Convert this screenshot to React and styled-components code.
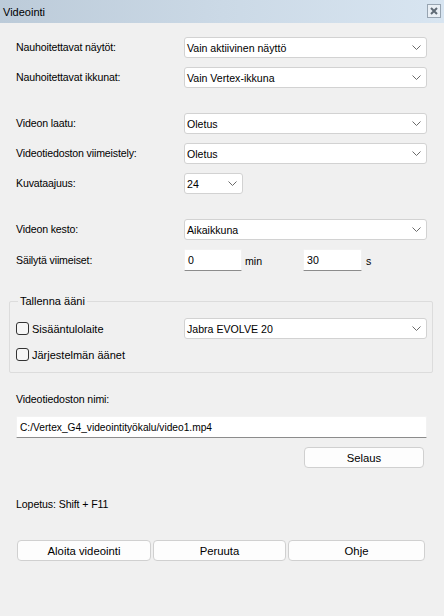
import React from "react";
import styled, { createGlobalStyle } from "styled-components";

const Global = createGlobalStyle`
  html, body { margin: 0; padding: 0; background: #f0f0f0; }
  body { font-family: "Liberation Sans", Arial, sans-serif; font-size: 10.6px; color: #000; }
  * { box-sizing: border-box; }
`;

const Window = styled.div`
  width: 444px;
  height: 616px;
  background: #f0f0f0;
  display: flex;
  flex-direction: column;
  overflow: hidden;
`;

const TitleBar = styled.div`
  height: 23px;
  flex: none;
  display: flex;
  align-items: center;
  justify-content: space-between;
  padding: 0 3px 0 3px;
  background: linear-gradient(90deg, #bccbd9 0%, #cbd9e6 50%, #d8e5f1 100%);
  font-size: 11px;
  color: #000;
`;

const CloseBox = styled.div`
  width: 14px;
  height: 14px;
  margin-top: -2px;
  border: 1px solid #97a4b1;
  background: #e9eff5;
  display: flex;
  align-items: center;
  justify-content: center;
`;

const Body = styled.div`
  padding: 14px 17px 0 16px;
  display: flex;
  flex-direction: column;
`;

const Section = styled.div`
  display: flex;
  flex-direction: column;
  gap: 9px;
  margin-top: ${(p) => p.$top || 0}px;
`;

const Row = styled.div`
  display: grid;
  grid-template-columns: 168px 1fr;
  align-items: center;
  min-height: 21px;
`;

const Label = styled.span`
  white-space: nowrap;
  line-height: 13px;
  letter-spacing: -0.15px;
`;

const SelectBox = styled.div`
  height: 21px;
  width: ${(p) => (p.$w ? `${p.$w}px` : "100%")};
  background: #fff;
  border: 1px solid #d2d2d2;
  border-radius: 3px;
  display: flex;
  align-items: center;
  justify-content: space-between;
  padding: 0 5px 0 2px;
  white-space: nowrap;
`;

const Chevron = () => (
  <svg width="9" height="5" viewBox="0 0 9 5" style={{ flex: "none" }}>
    <path d="M0.5 0.5 L4.5 4.5 L8.5 0.5" fill="none" stroke="#6a6a6a" strokeWidth="1" />
  </svg>
);

const Select = ({ value, w }) => (
  <SelectBox $w={w}>
    <span>{value}</span>
    <Chevron />
  </SelectBox>
);

const TextBox = styled.div`
  height: 22px;
  width: ${(p) => (p.$w ? `${p.$w}px` : "100%")};
  background: #fff;
  border: 1px solid #f2f2f2;
  border-bottom: 1px solid #8c8c8c;
  border-radius: 2px 2px 0 0;
  display: flex;
  align-items: center;
  padding: 0 3px;
  white-space: nowrap;
  font-size: ${(p) => p.$fs || 10.6}px;
`;

const InlineFields = styled.div`
  display: flex;
  align-items: center;
`;

const Unit = styled.span`
  width: ${(p) => p.$w}px;
  margin-left: ${(p) => p.$ml}px;
  line-height: 13px;
  padding-top: 3px;
`;

const GroupBox = styled.div`
  position: relative;
  margin: 30px -6px 0 -7px;
  border: 1px solid #dcdcdc;
  border-radius: 2px;
  padding: 16px 5px 7px 6px;
  display: flex;
  flex-direction: column;
  gap: 5px;
`;

const Legend = styled.span`
  position: absolute;
  top: -7px;
  left: 8px;
  padding: 0 2px;
  background: #f0f0f0;
  line-height: 13px;
  font-size: 11px;
`;

const CheckLabel = styled.label`
  display: flex;
  align-items: center;
  gap: 3px;
  white-space: nowrap;
  font-size: 11px;
`;

const Box = styled.span`
  width: 13px;
  height: 13px;
  border: 1px solid #333;
  border-radius: 3px;
  background: #f6f6f6;
  flex: none;
`;

const PlainLabel = styled.div`
  line-height: 14px;
  margin-top: ${(p) => p.$top}px;
  letter-spacing: -0.1px;
`;

const Button = styled.div`
  height: 21px;
  background: #fdfdfd;
  border: 1px solid #d0d0d0;
  border-radius: 4px;
  display: flex;
  align-items: center;
  justify-content: center;
  font-size: 11.3px;
`;

const BrowseRow = styled.div`
  display: flex;
  justify-content: flex-end;
  margin-top: 9px;
  padding-right: 3px;
`;

const BrowseButton = styled(Button)`
  width: 120px;
`;

const ButtonBar = styled.div`
  display: grid;
  grid-template-columns: 134px 133px 137px;
  gap: 2px;
  margin: 29px 0 0 1px;
`;

const Spacer = styled.div`
  margin-top: 10px;
`;

export default function App() {
  return (
    <>
      <Global />
      <Window>
        <TitleBar>
          <span>Videointi</span>
          <CloseBox>
            <svg width="8" height="8" viewBox="0 0 8 8">
              <path d="M1 1 L7 7 M7 1 L1 7" stroke="#5f6a75" strokeWidth="2" />
            </svg>
          </CloseBox>
        </TitleBar>
        <Body>
          <Section>
            <Row>
              <Label>Nauhoitettavat näytöt:</Label>
              <Select value="Vain aktiivinen näyttö" />
            </Row>
            <Row>
              <Label>Nauhoitettavat ikkunat:</Label>
              <Select value="Vain Vertex-ikkuna" />
            </Row>
          </Section>
          <Section $top={25}>
            <Row>
              <Label>Videon laatu:</Label>
              <Select value="Oletus" />
            </Row>
            <Row>
              <Label>Videotiedoston viimeistely:</Label>
              <Select value="Oletus" />
            </Row>
            <Row>
              <Label>Kuvataajuus:</Label>
              <Select value="24" w={59} />
            </Row>
          </Section>
          <Section $top={25}>
            <Row>
              <Label>Videon kesto:</Label>
              <Select value="Aikaikkuna" />
            </Row>
            <Row>
              <Label>Säilytä viimeiset:</Label>
              <InlineFields>
                <TextBox $w={58}>0</TextBox>
                <Unit $w={58} $ml={3}>min</Unit>
                <TextBox $w={59}>30</TextBox>
                <Unit $w={20} $ml={4}>s</Unit>
              </InlineFields>
            </Row>
          </Section>
          <GroupBox>
            <Legend>Tallenna ääni</Legend>
            <Row>
              <CheckLabel>
                <Box />
                Sisääntulolaite
              </CheckLabel>
              <Select value="Jabra EVOLVE 20" />
            </Row>
            <Row>
              <CheckLabel>
                <Box />
                Järjestelmän äänet
              </CheckLabel>
            </Row>
          </GroupBox>
          <PlainLabel $top={19}>Videotiedoston nimi:</PlainLabel>
          <Spacer>
            <TextBox $fs={10.2}>C:/Vertex_G4_videointityökalu/video1.mp4</TextBox>
          </Spacer>
          <BrowseRow>
            <BrowseButton>Selaus</BrowseButton>
          </BrowseRow>
          <PlainLabel $top={29}>Lopetus: Shift + F11</PlainLabel>
          <ButtonBar>
            <Button>Aloita videointi</Button>
            <Button>Peruuta</Button>
            <Button>Ohje</Button>
          </ButtonBar>
        </Body>
      </Window>
    </>
  );
}
